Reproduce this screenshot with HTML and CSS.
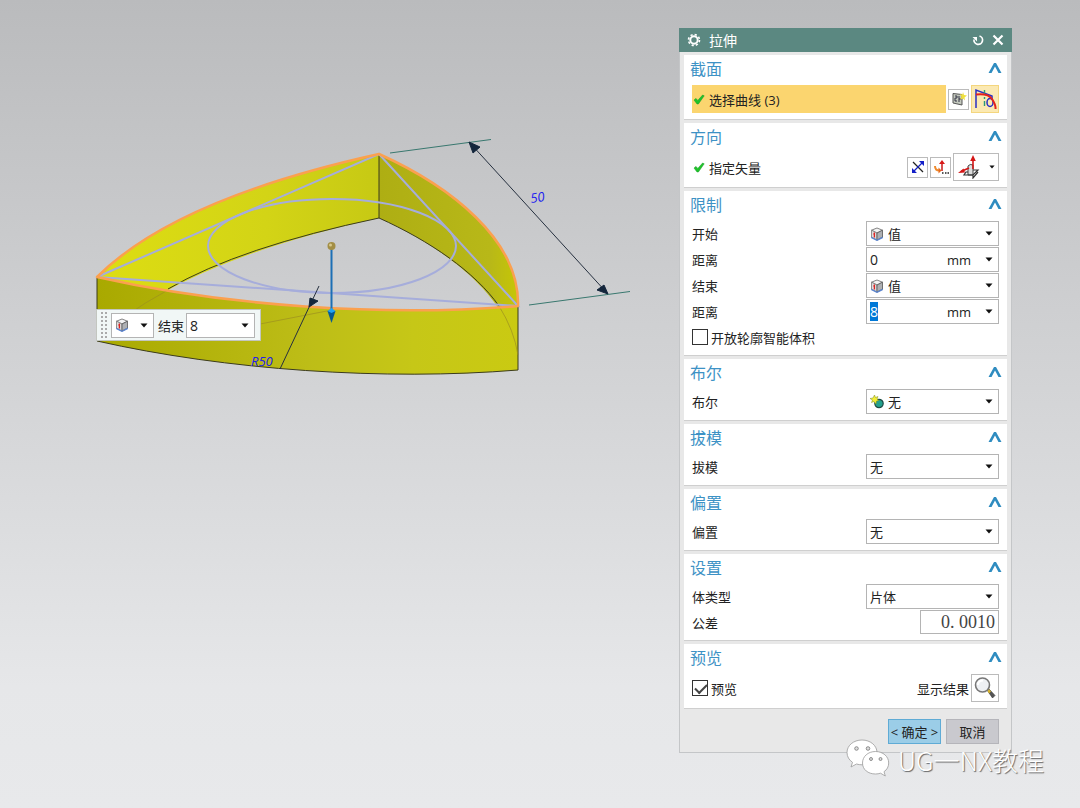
FILE: index.html
```html
<!DOCTYPE html>
<html lang="zh">
<head>
  <meta charset="UTF-8">
  <title>拉伸</title>
  <link rel="stylesheet" href="styles.css">
</head>
<body>

  <!-- shared icons -->
  <svg class="defs" aria-hidden="true">
    <symbol id="caret" viewBox="0 0 8 5"><path d="M0.5 0.5h7L4 4.5z" fill="#111"/></symbol>
    <symbol id="chevron" viewBox="0 0 14 12"><path d="M0.5 11 6 1h2l5.500 10h-3L7 4.600 3.500 11z" fill="#2f8cc0"/></symbol>
    <symbol id="tick" viewBox="0 0 12 12"><path d="M1 7 3 5.400l1.800 2L9.600 2l1.600.8L5.400 11H4z" fill="#1fc32b" stroke="#159a20" stroke-width=".5"/></symbol>
    <symbol id="cube" viewBox="0 0 14 14">
      <path d="M1.500 3.200 7 1l5.500 2.200L7 6z" fill="#f4f4f4" stroke="#666" stroke-width=".8"/>
      <path d="M1.500 3.200 7 6v7l-5.500-2.800z" fill="#ddd" stroke="#777" stroke-width=".8"/>
      <path d="M12.500 3.200 7 6v7l5.500-2.800z" fill="#aeb0b3" stroke="#555" stroke-width=".8"/>
      <path d="M1.200 10.400 7 13.400l5.800-3" fill="none" stroke="#5b84cf" stroke-width="1.200"/>
      <path d="M4.400 5.500v5M3.400 7h1.600" fill="none" stroke="#d22" stroke-width="1.300"/>
    </symbol>
  </svg>

  <svg class="model" viewBox="90 130 550 250">
    <defs>
      <linearGradient id="front" x1="0" x2="1">
        <stop offset="0" stop-color="#a9a900"/>
        <stop offset=".5" stop-color="#bdbd17"/>
        <stop offset=".75" stop-color="#c6c717"/>
        <stop offset="1" stop-color="#caca12"/>
      </linearGradient>
      <linearGradient id="left" x1="0" x2="1">
        <stop offset="0" stop-color="#dddd12"/>
        <stop offset=".6" stop-color="#d3d416"/>
        <stop offset="1" stop-color="#c7c914"/>
      </linearGradient>
      <linearGradient id="right" x1="0" x2="1">
        <stop offset="0" stop-color="#aeae13"/>
        <stop offset=".8" stop-color="#b8b818"/>
        <stop offset="1" stop-color="#c6c606"/>
      </linearGradient>
    </defs>

    <!-- walls -->
    <path d="M97 277Q175 199 379 154V218Q175 263 97 341z" fill="url(#left)"/>
    <path d="M379 154C450 186 520 240 518 306V370C520 304 450 250 379 218z" fill="url(#right)"/>
    <path d="M168 289Q240 247 379 218C430 241 475 272 499 306M379 154v64" fill="none" stroke="#3b3b1c"/>
    <path d="M97 277C225 306 385 317 518 306V370C385 381 225 370 97 341z" fill="url(#front)"/>
    <path d="M97 277v64C225 370 385 381 518 370v-64" fill="none" stroke="#3b3b1c"/>
    <path d="M168 290Q120 316 97 341M499 306Q514 330 518 355M260 324l72-14" fill="none" stroke="#9c8f20" stroke-width=".7"/>

    <!-- sketch -->
    <g fill="none" stroke="#a6addb" stroke-width="2">
      <path d="M97 277 379 154 518 306z"/>
      <ellipse cx="332" cy="246" rx="124" ry="47"/>
    </g>
    <path d="M97 277Q175 199 379 154C450 186 520 240 518 306C385 317 225 306 97 277z" fill="none" stroke="#fba04f" stroke-width="2.500" stroke-linejoin="round"/>

    <!-- dimensions -->
    <path d="M390 153 491 139.500M529 305l101-13.500" stroke="#39786f" fill="none"/>
    <path d="M470 143 607 293M319 286l-39 83" stroke="#26303f" fill="none"/>
    <path d="M469 142l11 5-7 6zM608 294l-4-9-7 5zM309 307l1-9 8 3z" fill="#14263c" stroke="#14263c"/>
    <text class="dim" x="531" y="203" transform="rotate(-8 531 203)">50</text>
    <text class="dim" x="251" y="366">R50</text>

    <!-- drag handle -->
    <path d="M331.500 248v66" stroke="#1c6fb5" stroke-width="2"/>
    <path d="M327.500 311h8L331.500 323z" fill="#075a93"/>
    <path d="M327.500 311l4-3 4 3-4 2z" fill="#20a4f3"/>
    <circle cx="331.500" cy="246" r="4" fill="#a38e45"/>
    <circle cx="330.500" cy="245" r="1.500" fill="#d8c98c"/>
  </svg>

  <div class="minibar">
    <span class="grip"></span>
    <button class="combo type" aria-label="类型">
      <svg class="i14"><use href="#cube"/></svg>
      <svg class="caret"><use href="#caret"/></svg>
    </button>
    <label for="mini-end">结束</label>
    <div class="combo">
      <input id="mini-end" value="8">
      <svg class="caret"><use href="#caret"/></svg>
    </div>
  </div>

  <div class="dialog">
    <div class="titlebar">
      <svg class="i14" viewBox="0 0 14 14"><circle cx="7" cy="7" r="3.700" fill="none" stroke="#fff" stroke-width="2"/><circle cx="7" cy="7" r="5.500" fill="none" stroke="#fff" stroke-width="1.600" stroke-dasharray="2.200 2.120"/></svg>
      <h1>拉伸</h1>
      <button aria-label="重置"><svg class="i14" viewBox="0 0 14 14"><path d="M8.500 3A4.300 4.300 0 1 1 3 6.500" fill="none" stroke="#fff" stroke-width="1.700"/><path d="M1.500 4h4.500v4.500z" fill="#fff"/></svg></button>
      <button aria-label="关闭"><svg class="i14" viewBox="0 0 14 14"><path d="M2.500 2.500l9 9M11.500 2.500l-9 9" stroke="#fff" stroke-width="2.200"/></svg></button>
    </div>

    <section>
      <h2>截面 <svg class="chevron"><use href="#chevron"/></svg></h2>
      <div class="row tall">
        <div class="pick active"><svg class="i12"><use href="#tick"/></svg>选择曲线 (3)</div>
        <button class="tool" aria-label="绘制截面">
          <svg class="i16" viewBox="0 0 16 16"><path d="M2 2.500l9 1v10.500l-9-2z" fill="#c3c8bd" stroke="#555"/><path d="M4 5h2v2H4v3h2M8 5v6M10 8H8" fill="none" stroke="#334"/><path d="M12 1l1 3 3 .5-2.500 2 .5 3-2-2-3 1 1.500-2.500L9 3l2.500.5z" fill="#f0e13c"/></svg>
        </button>
        <button class="tool big on" aria-label="曲线">
          <svg class="i24" viewBox="0 0 24 24"><path d="M3 21V3l16 6v4" fill="none" stroke="#2a2fc4" stroke-width="1.500"/><path d="M11.500 3v18" stroke="#2b9a78" stroke-width="1.400" stroke-dasharray="5 2 2 2"/><ellipse cx="17" cy="15.500" rx="3" ry="4" fill="none" stroke="#2a2fc4" stroke-width="1.500"/><path d="M3 7.500Q15 6 19 12T22.500 22" fill="none" stroke="#e3221c" stroke-width="2"/></svg>
        </button>
      </div>
    </section>

    <section>
      <h2>方向 <svg class="chevron"><use href="#chevron"/></svg></h2>
      <div class="row tall">
        <div class="pick"><svg class="i12"><use href="#tick"/></svg>指定矢量</div>
        <button class="tool" aria-label="反向">
          <svg class="i16" viewBox="0 0 16 16"><path d="M3 3l10 10" stroke="#222" stroke-width="1.200"/><path d="M13 3 3 13" stroke="#1420c8" stroke-width="1.200"/><path d="M14 2v5L9 2zM2 14V9l5 5z" fill="#1420c8"/></svg>
        </button>
        <button class="tool" aria-label="矢量对话框">
          <svg class="i16" viewBox="0 0 16 16"><path d="M9 12V4" stroke="#c81818" stroke-width="1.500"/><path d="M9 1l3 4H6z" fill="#d81818"/><path d="M2 7q0 4.500 4.500 4.500" fill="none" stroke="#ef8a2c" stroke-width="2"/><path d="M5.500 8.500l3 3-3 3z" fill="#e56a1c"/><path d="M9 14h1.500M12 14h1.500M14.500 14H16" stroke="#222" stroke-width="1.500"/></svg>
        </button>
        <button class="tool wide" aria-label="矢量类型">
          <svg class="i24" viewBox="0 0 24 24"><path d="M11 11q2-2.500 5-1v10h-5z" fill="#ddd" stroke="#444"/><path d="M11 17H9l-2 3h9l5-5h-5M16 20v3l5-6" fill="none" stroke="#333" stroke-width="1.200"/><path d="M12 13 4 16.500M16 14V5" stroke="#d41616" stroke-width="1.600"/><path d="M1 18l5.500-4.500 1.500 4zM16 0l2.800 6h-5.600z" fill="#d41616"/></svg>
          <svg class="caret small"><use href="#caret"/></svg>
        </button>
      </div>
    </section>

    <section>
      <h2>限制 <svg class="chevron"><use href="#chevron"/></svg></h2>
      <div class="row">
        <label for="start">开始</label>
        <div class="combo">
          <svg class="i14"><use href="#cube"/></svg>
          <select id="start"><option>值</option></select>
          <svg class="caret"><use href="#caret"/></svg>
        </div>
      </div>
      <div class="row">
        <label for="start-dist">距离</label>
        <div class="combo">
          <input id="start-dist" value="0"><span>mm</span>
          <svg class="caret"><use href="#caret"/></svg>
        </div>
      </div>
      <div class="row">
        <label for="end">结束</label>
        <div class="combo">
          <svg class="i14"><use href="#cube"/></svg>
          <select id="end"><option>值</option></select>
          <svg class="caret"><use href="#caret"/></svg>
        </div>
      </div>
      <div class="row">
        <label for="end-dist">距离</label>
        <div class="combo">
          <input id="end-dist" value="8"><span>mm</span>
          <svg class="caret"><use href="#caret"/></svg>
        </div>
      </div>
      <div class="row">
        <label class="check"><input type="checkbox">开放轮廓智能体积</label>
      </div>
    </section>

    <section>
      <h2>布尔 <svg class="chevron"><use href="#chevron"/></svg></h2>
      <div class="row">
        <label for="bool">布尔</label>
        <div class="combo">
          <svg class="i14" viewBox="0 0 14 14"><circle cx="9" cy="8.500" r="4.200" fill="#23a08c" stroke="#1b4a44" stroke-width="1.200"/><path d="M4.500 0l1 2.500L8 1.500 7 4l2 1.500-2.500.5L6 9 4 6.500 1.500 7.500 2.500 5 0 3.500l3-.5z" fill="#f3ee36" stroke="#7c8a20" stroke-width=".5"/></svg>
          <select id="bool"><option>无</option></select>
          <svg class="caret"><use href="#caret"/></svg>
        </div>
      </div>
    </section>

    <section>
      <h2>拔模 <svg class="chevron"><use href="#chevron"/></svg></h2>
      <div class="row">
        <label for="draft">拔模</label>
        <div class="combo">
          <select id="draft"><option>无</option></select>
          <svg class="caret"><use href="#caret"/></svg>
        </div>
      </div>
    </section>

    <section>
      <h2>偏置 <svg class="chevron"><use href="#chevron"/></svg></h2>
      <div class="row">
        <label for="offset">偏置</label>
        <div class="combo">
          <select id="offset"><option>无</option></select>
          <svg class="caret"><use href="#caret"/></svg>
        </div>
      </div>
    </section>

    <section>
      <h2>设置 <svg class="chevron"><use href="#chevron"/></svg></h2>
      <div class="row">
        <label for="body">体类型</label>
        <div class="combo">
          <select id="body"><option>片体</option></select>
          <svg class="caret"><use href="#caret"/></svg>
        </div>
      </div>
      <div class="row">
        <label for="tol">公差</label>
        <input id="tol" class="tol" value="0. 0010">
      </div>
    </section>

    <section>
      <h2>预览 <svg class="chevron"><use href="#chevron"/></svg></h2>
      <div class="row tall">
        <label class="check"><input type="checkbox" checked>预览</label>
        <label for="show">显示结果</label>
        <button id="show" class="tool big" aria-label="显示结果">
          <svg class="i24" viewBox="0 0 24 24"><path d="M14 14l2-1 6 6.500-2.500 2.500z" fill="#555" stroke="#333" stroke-width=".6"/><path d="M14 14l2-1 2 2.500-2 2z" fill="#d8b52c"/><circle cx="9.500" cy="9" r="7" fill="#eef0f3" stroke="#777" stroke-width="1.600"/><path d="M5 9q0-4.500 5-4.500" fill="none" stroke="#fff" stroke-width="2"/></svg>
        </button>
      </div>
    </section>

    <div class="actions">
      <button class="ok">&lt; 确定 &gt;</button>
      <button>取消</button>
    </div>
  </div>

  <div class="watermark">
    <svg viewBox="0 0 44 40">
      <g fill="#fff" stroke="#9b9b9b" stroke-width=".8">
        <path d="M16 2C7.500 2 1 7.500 1 14.500c0 4 2 7.500 5.500 9.800L5 29l5.500-3c2 .6 3.500.8 5.500.8 8.500 0 15-5.500 15-12.300S24.500 2 16 2z"/>
        <path d="M29.500 13.500C22 13.500 16.500 18.500 16.500 25S22 36 29.500 36c1.800 0 3.500-.3 5-.8l4.800 2.800-1.300-4.300c3-2 4.700-5 4.700-8.700 0-6.500-5.700-11.500-13.200-11.500z"/>
      </g>
      <g fill="#ddd" stroke="#777" stroke-width=".8">
        <circle cx="10.500" cy="10.500" r="1.800"/><circle cx="22" cy="10.500" r="1.800"/>
        <circle cx="25" cy="21" r="1.500"/><circle cx="34.500" cy="21" r="1.500"/>
      </g>
    </svg>
    <span>UG一NX教程</span>
  </div>

  <script>
    // end distance is the value being edited
    const dist = document.getElementById("end-dist");
    dist.focus();
    dist.select();
  </script>

</body>
</html>
```
FILE: styles.css
```css
* { box-sizing: border-box; }

body {
  margin: 0;
  min-height: 100vh;
  position: relative;
  overflow: hidden;
  background: linear-gradient(#babbbd, #d3d4d6 48%, #e6e7e9 85%, #e8e9eb);
  font-family: "Open Sans", "Noto Sans CJK SC", sans-serif;
  font-size: 13px;
  color: #222;
}

button, input, select {
  font: inherit;
  color: inherit;
}

svg { display: block; flex: none; }

.defs { display: none; }
.i12 { width: 12px; height: 12px; }
.i14 { width: 14px; height: 14px; }
.i16 { width: 16px; height: 16px; }
.i24 { width: 24px; height: 24px; }
.caret { width: 8px; height: 5px; }
.caret.small { width: 6px; height: 4px; }
.chevron { width: 14px; height: 12px; }

/* canvas */
.model {
  position: absolute;
  left: 90px;
  top: 130px;
  width: 550px;
}

.dim {
  font-size: 13px;
  font-style: italic;
  fill: #2020f0;
}

.minibar {
  position: absolute;
  left: 96px;
  top: 309px;
  display: flex;
  align-items: center;
  height: 32px;
  padding: 0 5px 0 3px;
  background: #f1f7f6;
  border: 1px solid #c3c6c0;
}

.minibar label { margin: 0 2px 0 4px; }
.minibar .combo { width: 69px; }
.minibar .combo.type { width: 43px; }

.grip {
  width: 8px;
  height: 28px;
  margin-right: 3px;
  background: radial-gradient(#aaa 1px, transparent 1px) 0 0 / 4px 4px;
}

/* dialog */
.dialog {
  position: absolute;
  top: 28px;
  right: 68px;
  width: 333px;
  background: #e8e8e8;
  border: 1px solid #c4c6c8;
  border-top: 0;
}

.titlebar {
  display: flex;
  align-items: center;
  gap: 6px;
  height: 24px;
  margin: 0 -1px 3px;
  padding: 0 7px 0 8px;
  background: #5b8881;
  color: #fff;
}

.titlebar h1 {
  flex: 1;
  margin: 0 0 0 2px;
  font-size: 14px;
  font-weight: 400;
}

.titlebar button {
  padding: 0;
  border: 0;
  background: none;
}

section {
  margin: 0 4px 3px;
  padding: 0 8px 6px;
  background: #fff;
  border-bottom: 1px solid #cfcfcf;
}

h2 {
  display: flex;
  justify-content: space-between;
  align-items: center;
  height: 25px;
  margin: 0 -3px 5px -2px;
  font-size: 16px;
  font-weight: 400;
  color: #3d92c5;
}

.row {
  display: flex;
  align-items: center;
  gap: 2px;
  min-height: 24px;
}

.row + .row { margin-top: 1px; }
.row.tall { height: 28px; }
.row > label:first-child { flex: 1; }

.combo {
  display: flex;
  align-items: center;
  gap: 4px;
  width: 133px;
  height: 25px;
  padding: 0 5px 0 3px;
  background: #fff;
  border: 1px solid #b4b4b4;
}

button.combo { justify-content: space-between; }

.combo select, .combo input {
  flex: 1;
  min-width: 0;
  padding: 0;
  border: 0;
  outline: 0;
  background: none;
  appearance: none;
}

.combo input { font-size: 14px; }
.combo span { margin-right: 10px; }

.combo input::selection {
  background: #0078d7;
  color: #fff;
}

.tol {
  width: 79px;
  height: 24px;
  padding: 0 3px;
  border: 1px solid #b4b4b4;
  font-family: "Liberation Serif", serif;
  font-size: 18px;
  text-align: right;
  color: #444;
}

.pick {
  flex: 1;
  display: flex;
  align-items: center;
  gap: 4px;
  height: 28px;
  padding-left: 1px;
}

.pick.active { background: #fbd56f; }

.tool {
  display: flex;
  align-items: center;
  justify-content: center;
  width: 21px;
  height: 21px;
  padding: 0;
  background: #fff;
  border: 1px solid #bbb;
}

.tool.big {
  width: 28px;
  height: 28px;
}

.tool.wide {
  width: 46px;
  height: 28px;
  gap: 8px;
}

.tool.on {
  background: #fbe9b2;
  border-color: #f4d67e;
}

.check {
  display: flex;
  align-items: center;
  gap: 3px;
}

.check input {
  appearance: none;
  width: 16px;
  height: 16px;
  margin: 0;
  border: 1px solid #333;
  background: #fff;
}

.check input:checked::before {
  content: "";
  display: block;
  width: 10px;
  height: 5px;
  margin: 3px 2px;
  border: solid #444;
  border-width: 0 0 2px 2px;
  transform: rotate(-45deg);
}

.actions {
  display: flex;
  justify-content: flex-end;
  gap: 5px;
  padding: 7px 12px 8px;
}

.actions button {
  width: 53px;
  height: 25px;
  padding: 0;
  line-height: 18px;
  white-space: nowrap;
  background: #c9c9ce;
  border: 1px solid #b5b5ba;
}

.actions .ok {
  background: #9bcde7;
  border-color: #5fabd5;
}

.watermark {
  position: absolute;
  right: 36px;
  top: 738px;
  display: flex;
  align-items: center;
  gap: 4px;
  font-size: 26px;
  line-height: 28px;
  font-family: "Noto Sans CJK SC", sans-serif;
  font-weight: 300;
  color: #fff;
  text-shadow: 1px 1px 1px #666;
}

.watermark span { padding: 4px 0 0 4px; }

.watermark svg {
  width: 44px;
  height: 40px;
}
```
